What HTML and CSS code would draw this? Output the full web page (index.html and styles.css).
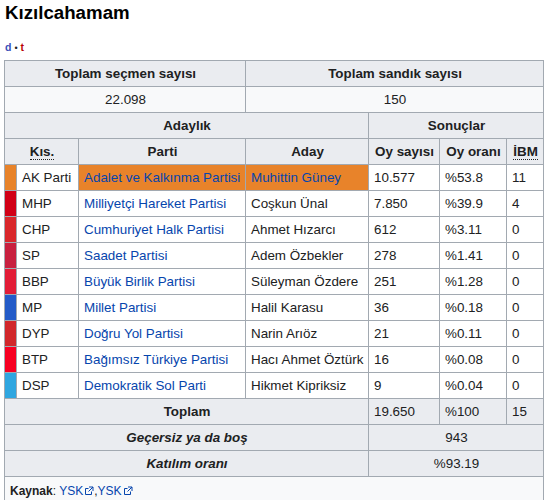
FILE: index.html
```html
<!DOCTYPE html>
<html lang="tr">
<head>
<meta charset="utf-8">
<title>Kızılcahamam</title>
<link rel="stylesheet" href="styles.css">
</head>
<body>
<div class="page">
  <h1 class="title">Kızılcahamam</h1>
  <div class="navbar"><a class="nav-d" href="#">d</a><span class="sep">•</span><a class="nav-t" href="#">t</a></div>
  <table class="results">
    <colgroup>
      <col class="c-color"><col class="c-abbr"><col class="c-party"><col class="c-cand"><col class="c-votes"><col class="c-pct"><col class="c-ibm">
    </colgroup>
    <tr><th colspan="3">Toplam seçmen sayısı</th><th colspan="4">Toplam sandık sayısı</th></tr>
    <tr class="light"><td colspan="3" class="center">22.098</td><td colspan="4" class="center">150</td></tr>
    <tr><th colspan="4">Adaylık</th><th colspan="3">Sonuçlar</th></tr>
    <tr><th colspan="2"><abbr>Kıs.</abbr></th><th>Parti</th><th>Aday</th><th>Oy sayısı</th><th>Oy oranı</th><th><abbr>İBM</abbr></th></tr>
    <tr class="data">
      <td class="sw akp"></td><td>AK Parti</td><td class="akp"><a href="#">Adalet ve Kalkınma Partisi</a></td><td class="akp"><a href="#">Muhittin Güney</a></td><td>10.577</td><td>%53.8</td><td>11</td>
    </tr>
    <tr class="data">
      <td class="sw mhp"></td><td>MHP</td><td><a href="#">Milliyetçi Hareket Partisi</a></td><td>Coşkun Ünal</td><td>7.850</td><td>%39.9</td><td>4</td>
    </tr>
    <tr class="data">
      <td class="sw chp"></td><td>CHP</td><td><a href="#">Cumhuriyet Halk Partisi</a></td><td>Ahmet Hızarcı</td><td>612</td><td>%3.11</td><td>0</td>
    </tr>
    <tr class="data">
      <td class="sw sp"></td><td>SP</td><td><a href="#">Saadet Partisi</a></td><td>Adem Özbekler</td><td>278</td><td>%1.41</td><td>0</td>
    </tr>
    <tr class="data">
      <td class="sw bbp"></td><td>BBP</td><td><a href="#">Büyük Birlik Partisi</a></td><td>Süleyman Özdere</td><td>251</td><td>%1.28</td><td>0</td>
    </tr>
    <tr class="data">
      <td class="sw mp"></td><td>MP</td><td><a href="#">Millet Partisi</a></td><td>Halil Karasu</td><td>36</td><td>%0.18</td><td>0</td>
    </tr>
    <tr class="data">
      <td class="sw dyp"></td><td>DYP</td><td><a href="#">Doğru Yol Partisi</a></td><td>Narin Arıöz</td><td>21</td><td>%0.11</td><td>0</td>
    </tr>
    <tr class="data">
      <td class="sw btp"></td><td>BTP</td><td><a href="#">Bağımsız Türkiye Partisi</a></td><td>Hacı Ahmet Öztürk</td><td>16</td><td>%0.08</td><td>0</td>
    </tr>
    <tr class="data">
      <td class="sw dsp"></td><td>DSP</td><td><a href="#">Demokratik Sol Parti</a></td><td>Hikmet Kipriksiz</td><td>9</td><td>%0.04</td><td>0</td>
    </tr>
    <tr class="total">
      <th colspan="4">Toplam</th><td>19.650</td><td>%100</td><td>15</td>
    </tr>
    <tr class="total">
      <th colspan="4" class="it">Geçersiz ya da boş</th><td colspan="3" class="center">943</td>
    </tr>
    <tr class="total">
      <th colspan="4" class="it">Katılım oranı</th><td colspan="3" class="center">%93.19</td>
    </tr>
    <tr class="source">
      <td colspan="7"><b>Kaynak</b>: <a href="#">YSK<svg class="ext" viewBox="0 0 10 10" width="10" height="10"><path d="M1.5 2.5h3M1.5 2.5v6h6v-3" fill="none" stroke="currentColor" stroke-width="1"/><path d="M5 1h4v4M9 1L4.5 5.5" fill="none" stroke="currentColor" stroke-width="1"/></svg></a>,<a href="#">YSK<svg class="ext" viewBox="0 0 10 10" width="10" height="10"><path d="M1.5 2.5h3M1.5 2.5v6h6v-3" fill="none" stroke="currentColor" stroke-width="1"/><path d="M5 1h4v4M9 1L4.5 5.5" fill="none" stroke="currentColor" stroke-width="1"/></svg></a></td>
    </tr>
  </table>
</div>
</body>
</html>
```

FILE: styles.css
```css
html, body {
  margin: 0;
  padding: 0;
  background: #fff;
}
body {
  font-family: "Liberation Sans", Arial, sans-serif;
  color: #202122;
}
.page {
  padding: 1px 4px 0 4px;
}
.title {
  margin: 0 0 0 1px;
  font-size: 18.7px;
  line-height: 24px;
  font-weight: bold;
  color: #000;
}
.navbar {
  margin: 15px 0 0 1px;
  font-size: 10.5px;
  line-height: 14px;
  font-weight: bold;
  height: 20px;
}
.navbar a { text-decoration: none; }
.nav-d { color: #3a50b8; }
.nav-t { color: #ba0000; }
.sep { color: #202122; padding: 0 3px; font-weight: normal; font-size: 9px; }

.results {
  border-collapse: collapse;
  table-layout: fixed;
  width: 540px;
  font-size: 13.4px;
  line-height: 19px;
  background: #f8f9fa;
  border: 1px solid #a2a9b1;
}
.c-color { width: 12px; }
.c-abbr { width: 62px; }
.c-party { width: 167px; }
.c-cand { width: 123px; }
.c-votes { width: 71px; }
.c-pct { width: 67px; }
.c-ibm { width: 37px; }

.results th,
.results td {
  border: 1px solid #a2a9b1;
  padding: 3px 4px 3px 5px;
  height: 19px;
  white-space: nowrap;
  overflow: hidden;
}
.results th {
  background: #eaecf0;
  font-weight: bold;
  text-align: center;
  color: #202122;
}
.results td { text-align: left; }
.results .center { text-align: center; }
.light td { background: #f8f9fa; }
.data td { background: #fff; }
.results a { color: #0645ad; text-decoration: none; }
abbr {
  text-decoration: none;
  border-bottom: 1px dotted #202122;
}
.results td.sw { padding: 0; }
.results .akp { background: #e8832a; }
.results .mhp { background: #d10016; }
.results .chp { background: #d9272b; }
.results .sp { background: #c8203f; }
.results .bbp { background: #e21c36; }
.results .mp { background: #235bc8; }
.results .dyp { background: #d1272b; }
.results .btp { background: #f70022; }
.results .dsp { background: #2fa6e0; }

.total td { background: #eaecf0; }
.results th.it { font-style: italic; }
.source td {
  background: #f8f9fa;
  font-size: 12px;
  padding: 5px 5px;
}
.ext {
  color: #0645ad;
  vertical-align: -1px;
  margin-left: 1px;
}
```
